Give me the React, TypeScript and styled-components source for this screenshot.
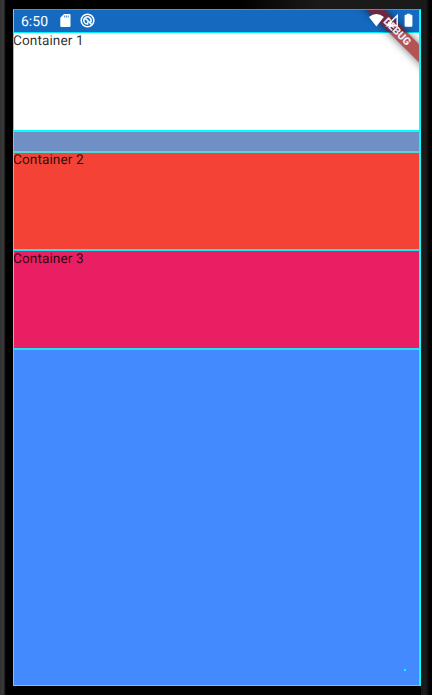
import React from "react";
import styled, { createGlobalStyle } from "styled-components";

const GlobalStyle = createGlobalStyle`
  * { box-sizing: border-box; }
  body { margin: 0; background: #000; overflow: hidden; }
`;

const Device = styled.div`
  display: grid;
  grid-template-columns: 13px 408px 11px;
  width: 432px;
  height: 695px;
  overflow: hidden;
  font-family: Roboto, sans-serif;
  text-rendering: geometricPrecision;
  background: #000;
`;

const LeftBezel = styled.div`
  background: linear-gradient(90deg, #303030 0, #3b3b3b 3px, #303030 4px, #101010 5px, #000 6px);
`;

const RightBezel = styled.div`
  background: linear-gradient(90deg, #181818 0, #1b1b1b 5px, #111 6px, #050505 8px, #000 9px);
`;

const Center = styled.div`
  display: flex;
  flex-direction: column;
`;

const TopBezel = styled.div`
  height: 9px;
  background: linear-gradient(90deg, #000 0, #000 55%, #1a1a1a 75%, #1a1a1a 100%);
`;

const Screen = styled.div`
  position: relative;
  display: flex;
  flex-direction: column;
  height: 677px;
  overflow: hidden;
  border: solid #00ffff;
  border-width: 1px 2px 1px 1px;
  border-top-color: #08b6c4;
  background: #448aff;
`;

const StatusBar = styled.div`
  display: flex;
  align-items: center;
  justify-content: space-between;
  flex: 0 0 22px;
  padding: 0 6px 0 7px;
  color: #fff;
  background: #156ac0;
`;

const StatusGroup = styled.div`
  position: relative;
  z-index: 1;
  display: flex;
  align-items: center;
  height: 22px;
  padding-bottom: 1px;
`;

const Clock = styled.span`
  width: 39px;
  padding-top: 2px;
  font-size: 14px;
  line-height: 22px;
`;

const CardIcon = styled.svg`
  margin-right: 9px;
`;

const Guide = styled.div<{ $color: string; $height: number }>`
  flex: 0 0 ${(p) => p.$height}px;
  background: ${(p) => p.$color};
`;

const Block = styled.div<{ $color: string; $height: number; $line?: number }>`
  flex: 0 0 ${(p) => p.$height}px;
  font-size: 13.6px;
  line-height: ${(p) => p.$line ?? 16}px;
  letter-spacing: 0.1px;
  text-indent: -1px;
  color: rgba(0, 0, 0, 0.83);
  background: ${(p) => p.$color};
`;

const BannerClip = styled.div`
  position: absolute;
  top: 0;
  right: 0;
  width: 90px;
  height: 90px;
  overflow: hidden;
`;

const Banner = styled.div`
  position: absolute;
  top: 14.8px;
  left: 18.2px;
  width: 100px;
  height: 13.4px;
  transform: rotate(45deg);
  text-align: center;
  font-size: 10.6px;
  font-weight: 900;
  line-height: 13.4px;
  color: rgba(255, 255, 255, 0.9);
  background: rgba(145, 12, 12, 0.7);
  box-shadow: 0 0 8px rgba(0, 0, 0, 0.55);
`;

const Marker = styled.i`
  position: absolute;
  right: 13px;
  bottom: 14px;
  width: 2px;
  height: 2px;
  background: #00ffff;
`;

export default function App() {
  return (
    <>
      <GlobalStyle />
      <Device>
        <LeftBezel />
        <Center>
          <TopBezel />
          <Screen>
            <StatusBar>
              <StatusGroup>
                <Clock>6:50</Clock>
                <CardIcon width="11" height="13" viewBox="0 0 11 13">
                  <path d="M4 0H9.5Q10.5 0 10.5 1V12Q10.5 13 9.5 13H1.3Q.3 13 .3 12V3.8Z" fill="#fff" />
                  <path d="M4.6 1.5V3.5M6.4 1.5V3.5M8.2 1.5V3.5" stroke="#4b87cb" strokeWidth="1" />
                </CardIcon>
                <svg width="15" height="15" viewBox="0 0 15 15" fill="none" stroke="#fff">
                  <circle cx="7.5" cy="7.5" r="6.3" strokeWidth="1.6" />
                  <path d="M4.3 9.2A3.6 3.6 0 1 1 10.4 9.5" strokeWidth="1.5" />
                  <path d="M5.4 5.3L11.6 11.5" strokeWidth="1.7" />
                  <path d="M4.2 9.2Q5.2 11.2 7.7 11V8.6" strokeWidth="1.3" />
                </svg>
              </StatusGroup>
              <StatusGroup>
                <svg width="45" height="15" viewBox="0 0 45 15" fill="#fff">
                  <path d="M.9 4Q8.4-1.8 15.9 4L8.4 13.4Z" />
                  <path d="M29.2 2.4V12.8H19Z" fill="none" stroke="#fff" strokeWidth="1.4" />
                  <path d="M20.2 8.9L24.2 12.9M24.2 8.9L20.2 12.9" stroke="#fff" strokeWidth="1.2" />
                  <path d="M38.8 .7H42.3V1.8H43.3Q44.4 1.8 44.4 2.8V12.7Q44.4 13.7 43.4 13.7H37.6Q36.6 13.7 36.6 12.7V2.8Q36.6 1.8 37.6 1.8H38.8Z" />
                </svg>
              </StatusGroup>
            </StatusBar>
            <Guide $color="#00efff" $height={1} />
            <Block $color="#ffffff" $height={97}>Container 1</Block>
            <Guide $color="#00ffff" $height={2} />
            <Guide $color="#708fc4" $height={19} />
            <Guide $color="#5bd5d0" $height={2} />
            <Block $color="#f44336" $height={96} $line={14}>Container 2</Block>
            <Guide $color="#1ce9ef" $height={2} />
            <Block $color="#e91e63" $height={97}>Container 3</Block>
            <Guide $color="#20e2f7" $height={2} />
            <BannerClip>
              <Banner>DEBUG</Banner>
            </BannerClip>
            <Marker />
          </Screen>
        </Center>
        <RightBezel />
      </Device>
    </>
  );
}
